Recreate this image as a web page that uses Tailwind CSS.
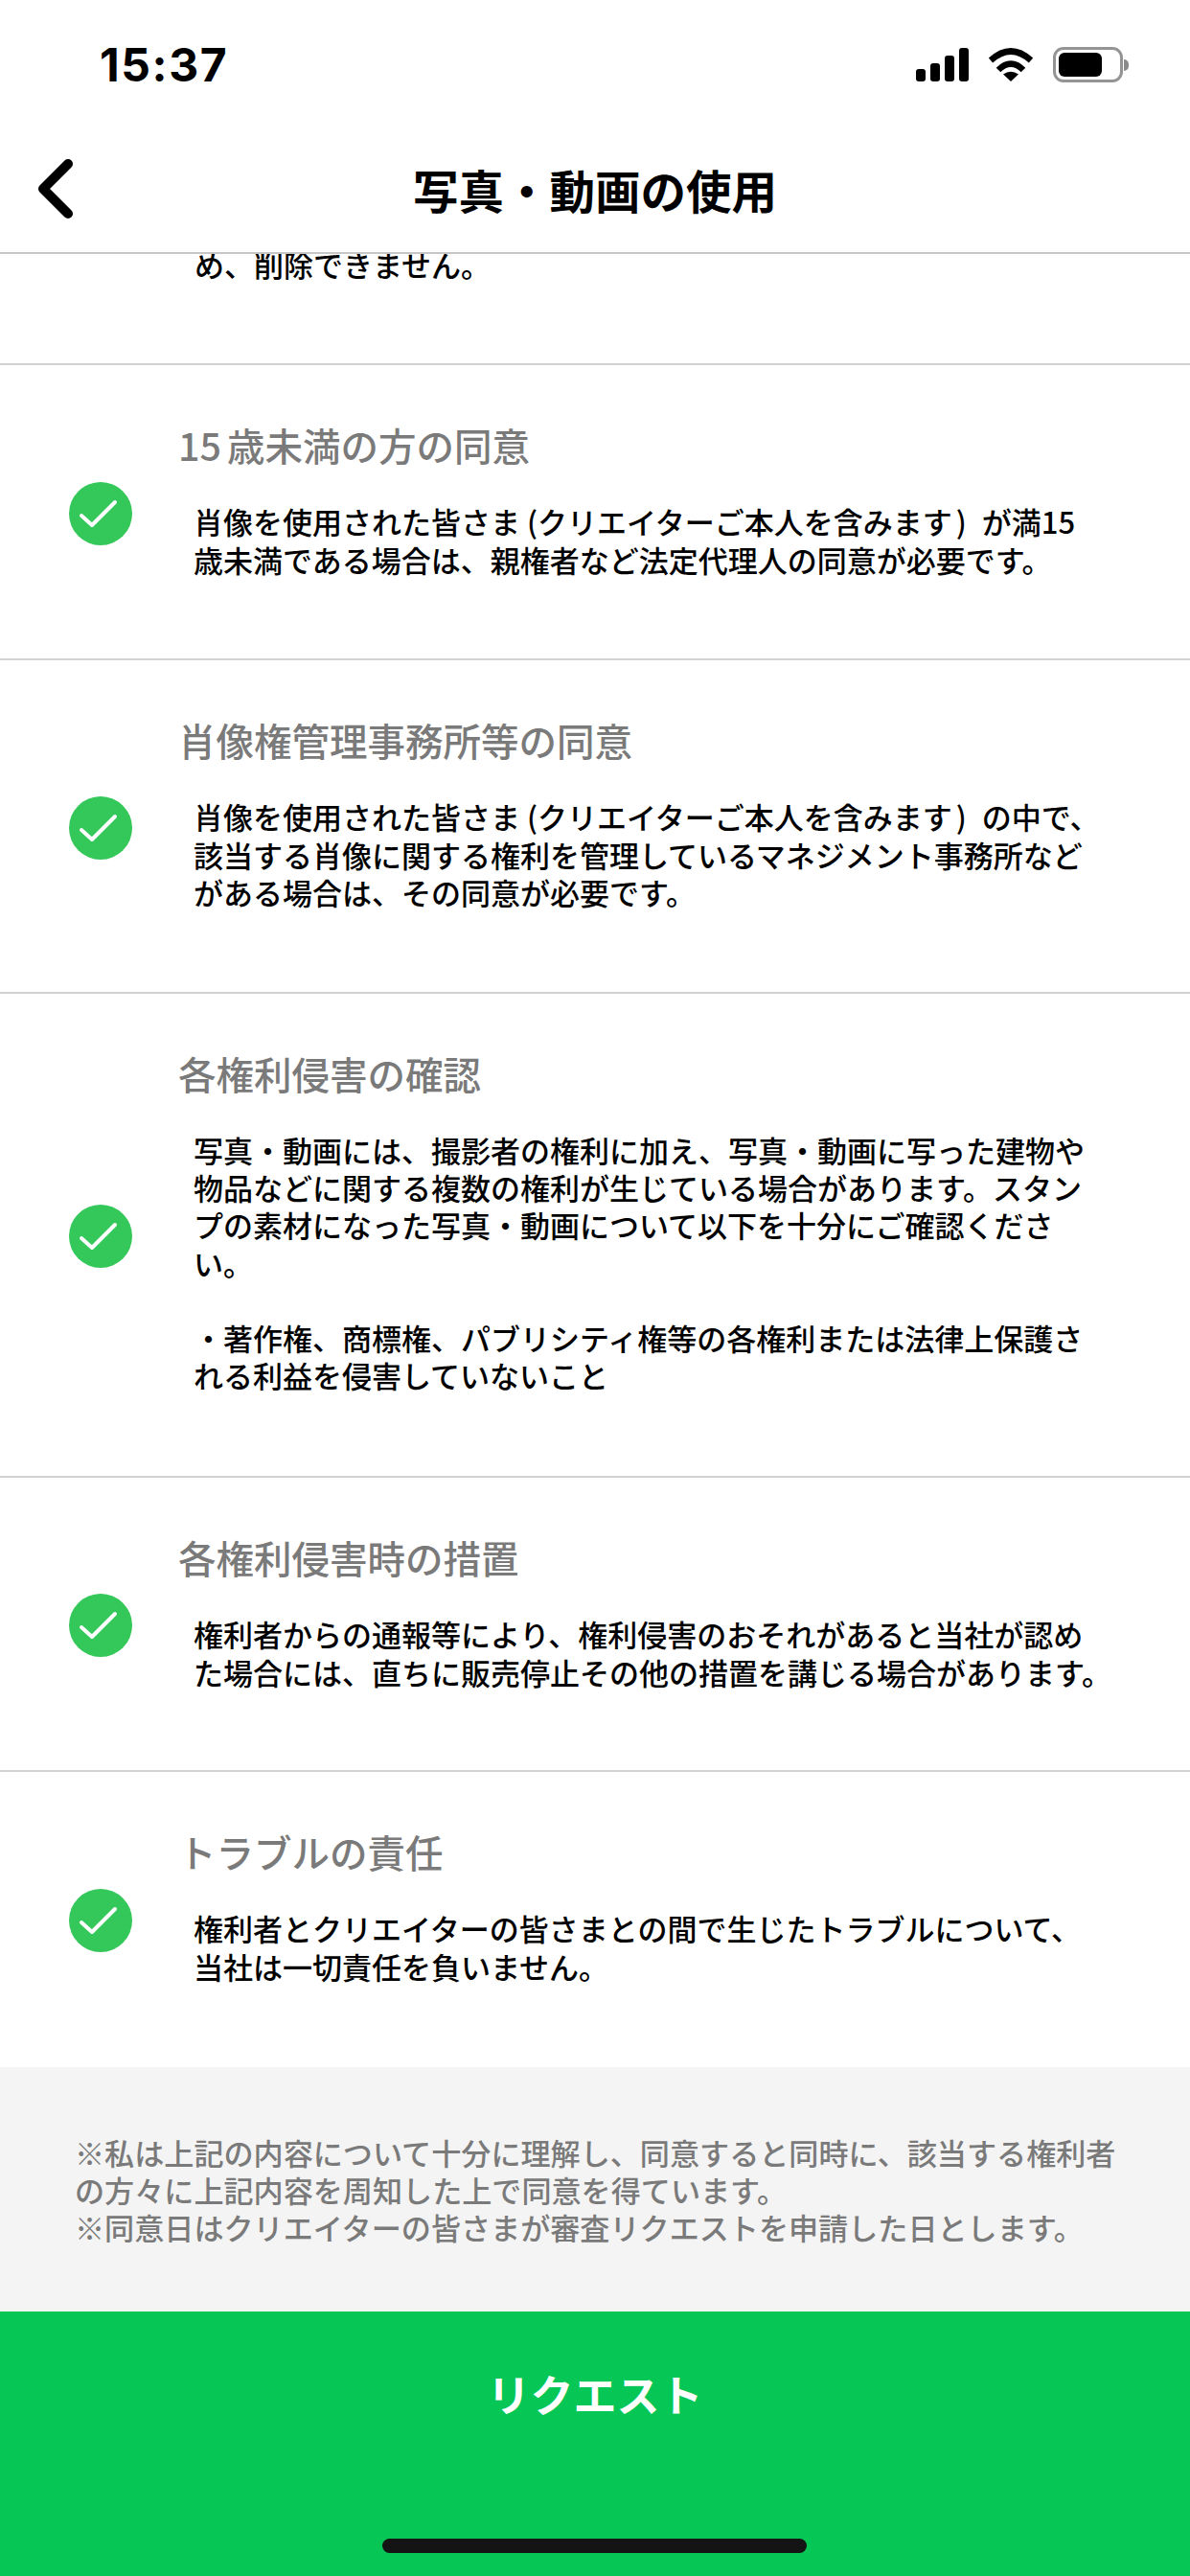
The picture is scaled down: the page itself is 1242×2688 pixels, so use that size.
<!DOCTYPE html>
<html lang="ja">
<head>
    <meta charset="UTF-8">
    <meta name="viewport" content="width=device-width, initial-scale=1.0">
    <title>写真・動画の使用</title>
    <script src="https://cdn.jsdelivr.net/npm/@tailwindcss/browser@4"></script>
</head>
<body class="bg-white font-['Noto_Sans_CJK_JP',sans-serif]">
<div class="flex flex-col w-[1242px] h-[2688px] overflow-hidden">

    <!-- status bar -->
    <div class="flex items-center justify-between h-[132px] pl-[104px] pr-[64px] pt-[3px] shrink-0">
        <span class="font-['Inter',sans-serif] font-bold text-[48px] tracking-[1.6px] leading-none text-black">15:37</span>
        <div class="flex items-center gap-[20px]">
            <svg width="55" height="35" viewBox="0 0 55 35" fill="#000">
                <rect x="0" y="22" width="10" height="13" rx="3"/>
                <rect x="15" y="16" width="10" height="19" rx="3"/>
                <rect x="30" y="8" width="10" height="27" rx="3"/>
                <rect x="45" y="0" width="10" height="35" rx="3"/>
            </svg>
            <svg width="48" height="35" viewBox="0 0 48 35" fill="none" stroke="#000" stroke-width="6.5">
                <path d="M3 13Q24 -6 45 13"/>
                <path d="M11 23Q24 10 37 23"/>
                <path d="M24 35L16 27.500Q24 22 32 27.500Z" fill="#000" stroke="none"/>
            </svg>
            <div class="flex items-center">
                <div class="w-[73px] h-[37px] rounded-[11px] border-[3px] border-[#949494] p-[3px]">
                    <div class="w-[45px] h-full rounded-[6px] bg-black"></div>
                </div>
                <div class="w-[5px] h-[12px] rounded-r-full bg-[#8a8a8a] ml-[1px]"></div>
            </div>
        </div>
    </div>

    <!-- nav -->
    <div class="relative flex items-center justify-center h-[133px] shrink-0 border-b-2 border-[#c6c6c6]">
        <svg class="absolute left-[38px] top-[34px]" width="40" height="62" viewBox="0 0 40 62" fill="none" stroke="#000" stroke-width="10" stroke-linecap="round" stroke-linejoin="round">
            <path d="M33 5L7 31L33 57"/>
        </svg>
        <h1 class="font-bold text-[47.5px] leading-none text-black">写真・動画の使用</h1>
    </div>

    <!-- list -->
    <div class="flex-1 overflow-hidden">
        <div class="h-[116px] overflow-hidden border-b-2 border-[#d2d2d2] pl-[203px]">
            <p class="-mt-[9px] font-medium text-[31px] leading-[40px] text-black">め、削除できません。</p>
        </div>

        <div class="flex items-center h-[308px] border-b-2 border-[#d2d2d2] pl-[72px]">
            <svg class="shrink-0 mt-[3px]" width="66" height="66" viewBox="0 0 66 66"><circle cx="33" cy="33" r="33" fill="#34c759"/><path d="M13 35L24 45L48 21" fill="none" stroke="#fff" stroke-width="4" stroke-linecap="round" stroke-linejoin="round"/></svg>
            <div class="self-start pt-[63px] pl-[48px]">
                <h2 class="font-medium text-[39.5px] leading-[40px] text-[#7a7a7a]">15<span class="ml-[6px]">歳未満の方の同意</span></h2>
                <p class="mt-[40px] pl-[16px] font-medium text-[31px] leading-[39.5px] text-black whitespace-nowrap">肖像を使用された皆さま<span class="ml-[7px]">(</span>クリエイターご本人を含みます<span class="ml-[4px] mr-[16px]">)</span>が満15<br>歳未満である場合は、親権者など法定代理人の同意が必要です。</p>
            </div>
        </div>

        <div class="flex items-center h-[348px] border-b-2 border-[#d2d2d2] pl-[72px]">
            <svg class="shrink-0 mt-[3px]" width="66" height="66" viewBox="0 0 66 66"><circle cx="33" cy="33" r="33" fill="#34c759"/><path d="M13 35L24 45L48 21" fill="none" stroke="#fff" stroke-width="4" stroke-linecap="round" stroke-linejoin="round"/></svg>
            <div class="self-start pt-[63px] pl-[48px]">
                <h2 class="font-medium text-[39.5px] leading-[40px] text-[#7a7a7a]">肖像権管理事務所等の同意</h2>
                <p class="mt-[40px] pl-[16px] font-medium text-[31px] leading-[39.5px] text-black whitespace-nowrap">肖像を使用された皆さま<span class="ml-[7px]">(</span>クリエイターご本人を含みます<span class="ml-[4px] mr-[16px]">)</span>の中で、<br>該当する肖像に関する権利を管理しているマネジメント事務所など<br>がある場合は、その同意が必要です。</p>
            </div>
        </div>

        <div class="flex items-center h-[505px] border-b-2 border-[#d2d2d2] pl-[72px]">
            <svg class="shrink-0 mt-[3px]" width="66" height="66" viewBox="0 0 66 66"><circle cx="33" cy="33" r="33" fill="#34c759"/><path d="M13 35L24 45L48 21" fill="none" stroke="#fff" stroke-width="4" stroke-linecap="round" stroke-linejoin="round"/></svg>
            <div class="self-start pt-[63px] pl-[48px]">
                <h2 class="font-medium text-[39.5px] leading-[40px] text-[#7a7a7a]">各権利侵害の確認</h2>
                <p class="mt-[40px] pl-[16px] font-medium text-[31px] leading-[39.2px] text-black whitespace-nowrap">写真・動画には、撮影者の権利に加え、写真・動画に写った建物や<br>物品などに関する複数の権利が生じている場合があります。スタン<br>プの素材になった写真・動画について以下を十分にご確認くださ<br>い。<br><br>・著作権、商標権、パブリシティ権等の各権利または法律上保護さ<br>れる利益を侵害していないこと</p>
            </div>
        </div>

        <div class="flex items-center h-[307px] border-b-2 border-[#d2d2d2] pl-[72px]">
            <svg class="shrink-0 mt-[3px]" width="66" height="66" viewBox="0 0 66 66"><circle cx="33" cy="33" r="33" fill="#34c759"/><path d="M13 35L24 45L48 21" fill="none" stroke="#fff" stroke-width="4" stroke-linecap="round" stroke-linejoin="round"/></svg>
            <div class="self-start pt-[63px] pl-[48px]">
                <h2 class="font-medium text-[39.5px] leading-[40px] text-[#7a7a7a]">各権利侵害時の措置</h2>
                <p class="mt-[40px] pl-[16px] font-medium text-[31px] leading-[39.5px] text-black whitespace-nowrap">権利者からの通報等により、権利侵害のおそれがあると当社が認め<br>た場合には、直ちに販売停止その他の措置を講じる場合があります。</p>
            </div>
        </div>

        <div class="flex items-center h-[307px] pl-[72px]">
            <svg class="shrink-0 mt-[3px]" width="66" height="66" viewBox="0 0 66 66"><circle cx="33" cy="33" r="33" fill="#34c759"/><path d="M13 35L24 45L48 21" fill="none" stroke="#fff" stroke-width="4" stroke-linecap="round" stroke-linejoin="round"/></svg>
            <div class="self-start pt-[63px] pl-[48px]">
                <h2 class="font-medium text-[39.5px] leading-[40px] text-[#7a7a7a]">トラブルの責任</h2>
                <p class="mt-[40px] pl-[16px] font-medium text-[31px] leading-[39.5px] text-black whitespace-nowrap">権利者とクリエイターの皆さまとの間で生じたトラブルについて、<br>当社は一切責任を負いません。</p>
            </div>
        </div>
    </div>

    <!-- consent note -->
    <div class="flex items-center h-[255px] shrink-0 bg-[#f4f4f4] px-[78px]">
        <p class="font-medium text-[31.1px] leading-[39px] text-[#7a7a7a] whitespace-nowrap">※私は上記の内容について十分に理解し、同意すると同時に、該当する権利者<br>の方々に上記内容を周知した上で同意を得ています。<br>※同意日はクリエイターの皆さまが審査リクエストを申請した日とします。</p>
    </div>

    <!-- button -->
    <div class="relative h-[276px] shrink-0 bg-[#06c755] flex justify-center pt-[58px]">
        <span class="font-bold text-[45px] leading-[56px] text-white">リクエスト</span>
        <div class="absolute left-[399px] top-[237px] w-[443px] h-[15px] rounded-full bg-[#141414]"></div>
    </div>
</div>
</body>
</html>
